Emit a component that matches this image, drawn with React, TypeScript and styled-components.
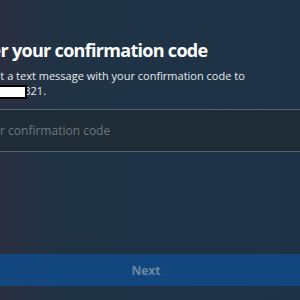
import React from "react";
import styled, { createGlobalStyle } from "styled-components";

const Global = createGlobalStyle`
  html, body { margin: 0; padding: 0; }
  body {
    width: 300px;
    height: 300px;
    overflow: hidden;
    background: linear-gradient(90deg, #2b2e40 0px, #253143 25px, #1f3345 60px, #1d3345 100%);
    font-family: "Open Sans", "Noto Sans", sans-serif;
  }
`;

const Page = styled.div`
  width: 366px;
  margin-left: -37px;
  padding-top: 38px;
  display: flex;
  flex-direction: column;
`;

const Title = styled.h1`
  margin: 0;
  font-size: 18px;
  font-weight: 700;
  color: #ffffff;
  line-height: 24px;
  letter-spacing: -0.7px;
`;

const Sub = styled.p`
  margin: 6px 0 0;
  font-size: 11px;
  line-height: 15px;
  color: #e6eaee;
`;

const Redact = styled.span`
  display: inline-block;
  box-sizing: border-box;
  background: #ffffff;
  border: 2px solid #000;
  width: 64px;
  height: 14px;
  vertical-align: -4px;
  margin-right: -9px;
  position: relative;
  z-index: 1;
`;

const Input = styled.div`
  margin-top: 10px;
  height: 41px;
  padding-left: 12px;
  background: #1f2b35;
  border-top: 1px solid #4c6275;
  border-bottom: 1px solid #4c6275;
  display: flex;
  align-items: center;
  font-size: 12px;
  color: #6f7a83;
`;

const Spacer = styled.div`
  height: 102px;
`;

const Button = styled.div`
  height: 32px;
  background: #12467e;
  display: flex;
  align-items: center;
  justify-content: center;
  font-size: 12px;
  font-weight: 700;
  color: #6c86a2;
`;

export default function App() {
  return (
    <>
      <Global />
      <Page>
        <Title>Enter your confirmation code</Title>
        <Sub>
          We sent a text message with your confirmation code to
          <br />
          <Redact />
          4321.
        </Sub>
        <Input>Enter confirmation code</Input>
        <Spacer />
        <Button>Next</Button>
      </Page>
    </>
  );
}
